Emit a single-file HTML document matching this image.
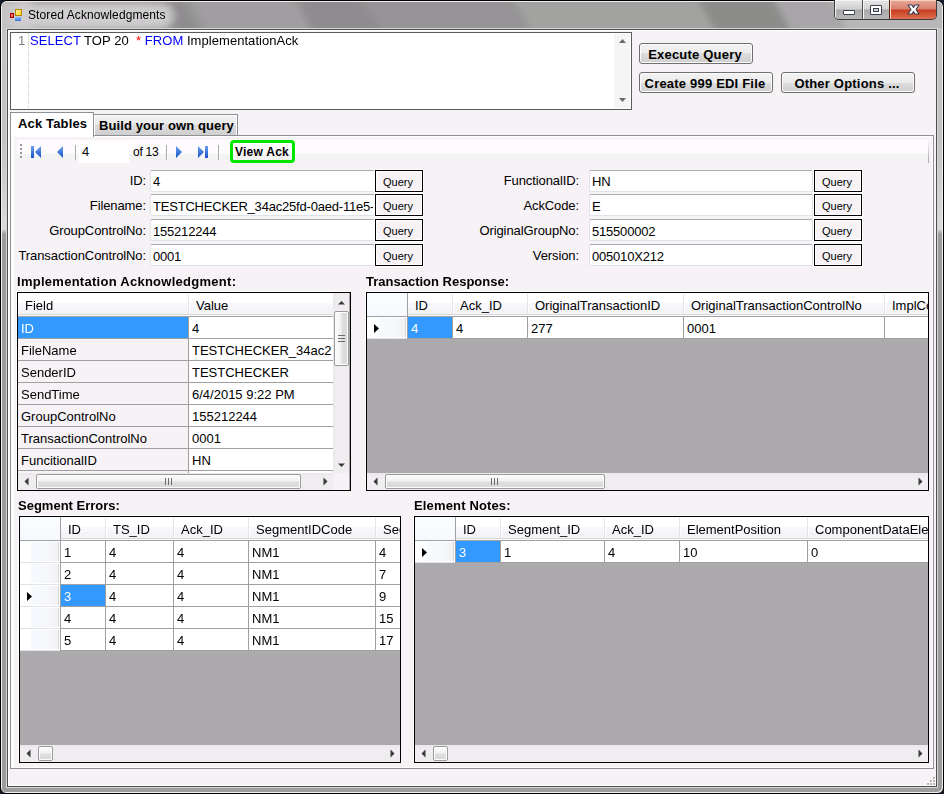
<!DOCTYPE html><html><head><meta charset="utf-8"><style>
html,body{margin:0;padding:0;width:944px;height:794px;overflow:hidden;background:#141c2c;}
body{position:relative;font-family:"Liberation Sans",sans-serif;}
div{position:absolute;box-sizing:border-box;}
.t{white-space:nowrap;}
</style></head><body>
<div style="left:0;top:0;width:944px;height:794px;border-radius:7px 7px 6px 6px;background:linear-gradient(180deg,#c6c4c6 0px,#c4c2c4 140px,#dcdadc 228px,#9c9e9c 233px,#9c9e9c 794px);border:1px solid #000;box-shadow:inset 1px 1px 0 #efedef,inset -1px -1px 0 #efedef;"></div>
<div style="left:2px;top:1px;width:940px;height:27px;border-radius:6px 6px 0 0;overflow:hidden;border-top:1px solid #eeeaee;background:#989698;"><div style="left:-2px;top:0;width:1000px;height:27px;filter:blur(3px);"><div style="left:150px;top:-5px;width:40px;height:40px;background:#8e8c8e;transform:skewX(28deg);"></div><div style="left:200px;top:-5px;width:105px;height:40px;background:#a09ea0;transform:skewX(28deg);"></div><div style="left:305px;top:-5px;width:68px;height:40px;background:#8e8c8e;transform:skewX(28deg);"></div><div style="left:373px;top:-5px;width:150px;height:40px;background:#969496;transform:skewX(28deg);"></div><div style="left:523px;top:-5px;width:185px;height:40px;background:#a2a2a0;transform:skewX(28deg);"></div><div style="left:708px;top:-5px;width:75px;height:40px;background:#8c8c8a;transform:skewX(28deg);"></div><div style="left:783px;top:-5px;width:100px;height:40px;background:#a8a6a8;transform:skewX(28deg);"></div><div style="left:840px;top:-5px;width:160px;height:40px;background:#b8b6b8;transform:skewX(28deg);"></div></div><div style="left:-10px;top:-4px;width:40px;height:36px;background:#c4c2c4;filter:blur(4px);"></div><div style="left:8px;top:1px;width:164px;height:26px;border-radius:13px;background:#d0ced0;filter:blur(4px);"></div></div>
<div style="left:6px;top:28px;width:932px;height:760px;border:1px solid #d8d8d8;"></div>
<div style="left:7px;top:29px;width:930px;height:758px;border:1px solid #4c504c;background:#f6f2f6;"></div>
<div style="left:8px;top:30px;width:928px;height:756px;border-left:1px solid #fff;border-top:1px solid #fff;border-bottom:1px solid #fff;"></div>
<div style="left:10px;top:13px;width:4px;height:5px;background:radial-gradient(#ffb0a0,#d03020);border:1px solid #a00;"></div>
<div style="left:15px;top:9px;width:7px;height:7px;background:linear-gradient(135deg,#fff0a0,#ffd020);border:1px solid #b08800;"></div>
<div style="left:15px;top:17px;width:6px;height:4px;background:linear-gradient(#90c0ff,#3070e0);"></div>
<div class="t" style="left:28px;top:8px;font-size:12px;line-height:14px;color:#000;letter-spacing:0.1px;">Stored Acknowledgments</div>
<div style="left:834px;top:0;width:103px;height:20px;border:1px solid #3c3c3c;border-top:none;border-radius:0 0 5px 5px;overflow:hidden;"><div style="left:0;top:0;width:28px;height:19px;background:linear-gradient(#e8e8e8 0,#d0d0d0 9px,#a8a8a8 10px,#b8b8b8 19px);border-right:1px solid #505050;box-shadow:inset 1px 1px 0 #f4f4f4;"></div><div style="left:28px;top:0;width:27px;height:19px;background:linear-gradient(#e8e8e8 0,#d0d0d0 9px,#a8a8a8 10px,#b8b8b8 19px);border-right:1px solid #602010;box-shadow:inset 1px 1px 0 #f4f4f4;"></div><div style="left:55px;top:0;width:47px;height:19px;background:linear-gradient(#eaa898 0,#d88070 9px,#c83c20 10px,#e07050 19px);box-shadow:inset 1px 1px 0 #f8d0c0;"></div></div>
<div style="left:843px;top:10px;width:12px;height:5px;background:#fff;border:1px solid #3a4050;border-radius:1px;"></div>
<div style="left:870px;top:5px;width:12px;height:10px;background:#fff;border:1px solid #3a4050;border-radius:1px;"></div>
<div style="left:873px;top:8px;width:6px;height:4px;background:#d0d0d0;border:1px solid #3a4050;"></div>
<svg style="position:absolute;left:904px;top:2px" width="20" height="16" viewBox="0 0 20 16"><path d="M4 3 L8 3 L9.5 5.5 L11 3 L15 3 L12 7.5 L15 12 L11 12 L9.5 9.5 L8 12 L4 12 L7 7.5 Z" fill="#fff" stroke="#3a4050" stroke-width="1.1" stroke-linejoin="round"/></svg>
<div style="left:10px;top:32px;width:622px;height:78px;border:1px solid #5a5c5a;background:#fff;"></div>
<div style="left:614px;top:34px;width:16px;height:74px;background:#f5f5f5;"></div>
<svg style="position:absolute;left:618px;top:38px" width="9" height="6"><path d="M1 5 L4.5 1 L8 5 Z" fill="#6a6a6a"/></svg>
<svg style="position:absolute;left:618px;top:97px" width="9" height="6"><path d="M1 1 L4.5 5 L8 1 Z" fill="#6a6a6a"/></svg>
<div class="t" style="left:18px;top:33px;font-size:13px;line-height:15px;color:#808080;">1</div>
<div style="left:28px;top:33px;width:1px;height:76px;background:repeating-linear-gradient(#c8c8c8 0,#c8c8c8 1px,transparent 1px,transparent 2px);"></div>
<div class="t" style="left:30px;top:33px;font-size:13px;line-height:15px;color:#000;letter-spacing:0.05px;"><span style="color:#0000ff">SELECT</span> TOP 20&nbsp; <span style="color:#ff0000">*</span> <span style="color:#0000ff">FROM</span> ImplementationAck</div>
<div style="left:639px;top:43px;width:114px;height:21px;border:1px solid #707070;border-radius:3px;background:linear-gradient(#f2f2f2 0,#ebebeb 50%,#dddddd 50%,#cfcfcf 100%);box-shadow:inset 0 0 0 1px #fcfcfc;"></div>
<div class="t" style="left:638px;top:47px;width:114px;text-align:center;font-size:13px;line-height:15px;font-weight:bold;letter-spacing:0.2px;">Execute Query</div>
<div style="left:639px;top:72px;width:134px;height:21px;border:1px solid #707070;border-radius:3px;background:linear-gradient(#f2f2f2 0,#ebebeb 50%,#dddddd 50%,#cfcfcf 100%);box-shadow:inset 0 0 0 1px #fcfcfc;"></div>
<div class="t" style="left:638px;top:76px;width:134px;text-align:center;font-size:13px;line-height:15px;font-weight:bold;letter-spacing:0.2px;">Create 999 EDI File</div>
<div style="left:781px;top:72px;width:134px;height:21px;border:1px solid #707070;border-radius:3px;background:linear-gradient(#f2f2f2 0,#ebebeb 50%,#dddddd 50%,#cfcfcf 100%);box-shadow:inset 0 0 0 1px #fcfcfc;"></div>
<div class="t" style="left:780px;top:76px;width:134px;text-align:center;font-size:13px;line-height:15px;font-weight:bold;letter-spacing:0.2px;">Other Options ...</div>
<div style="left:10px;top:135px;width:924px;height:634px;border:1px solid #8e9096;"></div>
<div style="left:11px;top:136px;width:922px;height:632px;border:1px solid #fff;"></div>
<div style="left:12px;top:137px;width:2px;height:630px;background:#fff;"></div>
<div style="left:93px;top:114px;width:145px;height:22px;border:1px solid #8e9096;background:linear-gradient(#f2f2f2 0,#ebebeb 45%,#dddddd 50%,#cfcfcf 100%);box-shadow:inset 1px 1px 0 #fff,inset -1px 0 0 #fff;"></div>
<div class="t" style="left:99px;top:118px;font-size:13px;line-height:15px;font-weight:bold;color:#000;letter-spacing:0.1px;">Build your own query</div>
<div style="left:10px;top:112px;width:84px;height:25px;border:1px solid #8e9096;border-bottom:none;background:#fff;"></div>
<div class="t" style="left:18px;top:116px;font-size:13px;line-height:15px;font-weight:bold;color:#000;letter-spacing:0.15px;">Ack Tables</div>
<div style="left:17px;top:140px;width:911px;height:20px;border-radius:3px 0 0 3px;background:linear-gradient(#fdfbfd 0,#fdfbfd 14px,#f4f3f4 14px,#f4f3f4 20px);"></div>
<div style="left:928px;top:141px;width:1px;height:22px;background:linear-gradient(#f4f2f4,#a8a8a8);"></div>
<div style="left:20px;top:144px;width:2px;height:2px;background:#9a9a9a;"></div>
<div style="left:20px;top:148px;width:2px;height:2px;background:#9a9a9a;"></div>
<div style="left:20px;top:152px;width:2px;height:2px;background:#9a9a9a;"></div>
<div style="left:20px;top:156px;width:2px;height:2px;background:#9a9a9a;"></div>
<svg style="position:absolute;left:30px;top:145px" width="200" height="14" viewBox="0 0 200 14"><defs><linearGradient id="bl" x1="0" y1="0" x2="0" y2="1"><stop offset="0" stop-color="#6aa0f0"/><stop offset="1" stop-color="#1a50c8"/></linearGradient></defs><rect x="1" y="1" width="3" height="12" fill="url(#bl)"/><path d="M11 1 L5 7 L11 13 Z" fill="url(#bl)"/><path d="M33 1 L27 7 L33 13 Z" fill="url(#bl)"/><path d="M146 1 L152 7 L146 13 Z" fill="url(#bl)"/><path d="M168 1 L174 7 L168 13 Z" fill="url(#bl)"/><rect x="175" y="1" width="3" height="12" fill="url(#bl)"/></svg>
<div style="left:75px;top:145px;width:1px;height:15px;background:#a8a8a8;box-shadow:1px 0 0 #fff;"></div>
<div style="left:166px;top:145px;width:1px;height:15px;background:#a8a8a8;box-shadow:1px 0 0 #fff;"></div>
<div style="left:218px;top:145px;width:1px;height:15px;background:#a8a8a8;box-shadow:1px 0 0 #fff;"></div>
<div style="left:79px;top:141px;width:50px;height:22px;background:#fff;"></div>
<div class="t" style="left:82px;top:144px;font-size:13px;line-height:15px;color:#000;">4</div>
<div class="t" style="left:133px;top:145px;font-size:12px;line-height:14px;color:#000;letter-spacing:-0.25px;">of 13</div>
<div style="left:230px;top:140px;width:65px;height:23px;border:3px solid #00e600;border-radius:4px;"></div>
<div class="t" style="left:235px;top:145px;font-size:12px;line-height:14px;font-weight:bold;color:#000;letter-spacing:0.25px;">View Ack</div>
<div class="t" style="right:798px;top:173px;font-size:13px;line-height:15px;color:#000;text-align:right;letter-spacing:-0.1px;">ID:</div>
<div style="left:150px;top:170px;width:225px;height:22px;background:#fff;border:1px solid #dfe2e8;border-top-color:#abadb3;border-radius:2px;"></div>
<div class="t" style="left:153px;top:174px;width:220px;overflow:hidden;font-size:13px;line-height:15px;letter-spacing:-0.2px;">4</div>
<div style="left:375px;top:170px;width:48px;height:22px;border:1px solid #000;background:#f6f2f6;box-shadow:inset 0 0 0 1px #fff,0 0 0 1px #fff;"></div>
<div class="t" style="left:383px;top:176px;font-size:11px;line-height:13px;color:#000;">Query</div>
<div class="t" style="right:798px;top:198px;font-size:13px;line-height:15px;color:#000;text-align:right;letter-spacing:-0.1px;">Filename:</div>
<div style="left:150px;top:194px;width:225px;height:22px;background:#fff;border:1px solid #dfe2e8;border-top-color:#abadb3;border-radius:2px;"></div>
<div class="t" style="left:153px;top:199px;width:220px;overflow:hidden;font-size:13px;line-height:15px;letter-spacing:-0.2px;">TESTCHECKER_34ac25fd-0aed-11e5-</div>
<div style="left:375px;top:194px;width:48px;height:22px;border:1px solid #000;background:#f6f2f6;box-shadow:inset 0 0 0 1px #fff,0 0 0 1px #fff;"></div>
<div class="t" style="left:383px;top:200px;font-size:11px;line-height:13px;color:#000;">Query</div>
<div class="t" style="right:798px;top:223px;font-size:13px;line-height:15px;color:#000;text-align:right;letter-spacing:-0.1px;">GroupControlNo:</div>
<div style="left:150px;top:219px;width:225px;height:22px;background:#fff;border:1px solid #dfe2e8;border-top-color:#abadb3;border-radius:2px;"></div>
<div class="t" style="left:153px;top:224px;width:220px;overflow:hidden;font-size:13px;line-height:15px;letter-spacing:-0.2px;">155212244</div>
<div style="left:375px;top:219px;width:48px;height:22px;border:1px solid #000;background:#f6f2f6;box-shadow:inset 0 0 0 1px #fff,0 0 0 1px #fff;"></div>
<div class="t" style="left:383px;top:225px;font-size:11px;line-height:13px;color:#000;">Query</div>
<div class="t" style="right:798px;top:248px;font-size:13px;line-height:15px;color:#000;text-align:right;letter-spacing:-0.1px;">TransactionControlNo:</div>
<div style="left:150px;top:244px;width:225px;height:22px;background:#fff;border:1px solid #dfe2e8;border-top-color:#abadb3;border-radius:2px;"></div>
<div class="t" style="left:153px;top:249px;width:220px;overflow:hidden;font-size:13px;line-height:15px;letter-spacing:-0.2px;">0001</div>
<div style="left:375px;top:244px;width:48px;height:22px;border:1px solid #000;background:#f6f2f6;box-shadow:inset 0 0 0 1px #fff,0 0 0 1px #fff;"></div>
<div class="t" style="left:383px;top:250px;font-size:11px;line-height:13px;color:#000;">Query</div>
<div class="t" style="right:365px;top:173px;font-size:13px;line-height:15px;color:#000;text-align:right;letter-spacing:-0.1px;">FunctionalID:</div>
<div style="left:589px;top:170px;width:224px;height:22px;background:#fff;border:1px solid #dfe2e8;border-top-color:#abadb3;border-radius:2px;"></div>
<div class="t" style="left:592px;top:174px;width:219px;overflow:hidden;font-size:13px;line-height:15px;letter-spacing:-0.2px;">HN</div>
<div style="left:814px;top:170px;width:48px;height:22px;border:1px solid #000;background:#f6f2f6;box-shadow:inset 0 0 0 1px #fff,0 0 0 1px #fff;"></div>
<div class="t" style="left:822px;top:176px;font-size:11px;line-height:13px;color:#000;">Query</div>
<div class="t" style="right:365px;top:198px;font-size:13px;line-height:15px;color:#000;text-align:right;letter-spacing:-0.1px;">AckCode:</div>
<div style="left:589px;top:194px;width:224px;height:22px;background:#fff;border:1px solid #dfe2e8;border-top-color:#abadb3;border-radius:2px;"></div>
<div class="t" style="left:592px;top:199px;width:219px;overflow:hidden;font-size:13px;line-height:15px;letter-spacing:-0.2px;">E</div>
<div style="left:814px;top:194px;width:48px;height:22px;border:1px solid #000;background:#f6f2f6;box-shadow:inset 0 0 0 1px #fff,0 0 0 1px #fff;"></div>
<div class="t" style="left:822px;top:200px;font-size:11px;line-height:13px;color:#000;">Query</div>
<div class="t" style="right:365px;top:223px;font-size:13px;line-height:15px;color:#000;text-align:right;letter-spacing:-0.1px;">OriginalGroupNo:</div>
<div style="left:589px;top:219px;width:224px;height:22px;background:#fff;border:1px solid #dfe2e8;border-top-color:#abadb3;border-radius:2px;"></div>
<div class="t" style="left:592px;top:224px;width:219px;overflow:hidden;font-size:13px;line-height:15px;letter-spacing:-0.2px;">515500002</div>
<div style="left:814px;top:219px;width:48px;height:22px;border:1px solid #000;background:#f6f2f6;box-shadow:inset 0 0 0 1px #fff,0 0 0 1px #fff;"></div>
<div class="t" style="left:822px;top:225px;font-size:11px;line-height:13px;color:#000;">Query</div>
<div class="t" style="right:365px;top:248px;font-size:13px;line-height:15px;color:#000;text-align:right;letter-spacing:-0.1px;">Version:</div>
<div style="left:589px;top:244px;width:224px;height:22px;background:#fff;border:1px solid #dfe2e8;border-top-color:#abadb3;border-radius:2px;"></div>
<div class="t" style="left:592px;top:249px;width:219px;overflow:hidden;font-size:13px;line-height:15px;letter-spacing:-0.2px;">005010X212</div>
<div style="left:814px;top:244px;width:48px;height:22px;border:1px solid #000;background:#f6f2f6;box-shadow:inset 0 0 0 1px #fff,0 0 0 1px #fff;"></div>
<div class="t" style="left:822px;top:250px;font-size:11px;line-height:13px;color:#000;">Query</div>
<div style="left:17px;top:292px;width:334px;height:199px;border:1px solid #000;background:#acaaac;box-shadow:-1px -1px 0 #fff;"></div>
<div style="left:18px;top:293px;width:332px;height:197px;overflow:hidden;">
<div style="left:0px;top:0px;width:316px;height:23px;background:linear-gradient(#fff 0,#fff 10px,#f7f7fc 10px,#f7f7fc 15px,#f4f3f5 15px,#f4f3f5 21px,#d8d8d8 21px,#d8d8d8 22px,#fdfdfd 22px);"></div>
<div style="left:0px;top:23px;width:316px;height:177px;background:#fff;"></div>
<div style="left:0px;top:23px;width:316px;height:1px;background:#a0a0a0;"></div>
<div style="left:0px;top:45px;width:316px;height:1px;background:#a0a0a0;"></div>
<div style="left:0px;top:67px;width:316px;height:1px;background:#a0a0a0;"></div>
<div style="left:0px;top:89px;width:316px;height:1px;background:#a0a0a0;"></div>
<div style="left:0px;top:111px;width:316px;height:1px;background:#a0a0a0;"></div>
<div style="left:0px;top:133px;width:316px;height:1px;background:#a0a0a0;"></div>
<div style="left:0px;top:155px;width:316px;height:1px;background:#a0a0a0;"></div>
<div style="left:0px;top:177px;width:316px;height:1px;background:#a0a0a0;"></div>
<div style="left:0px;top:199px;width:316px;height:1px;background:#a0a0a0;"></div>
<div style="left:170px;top:1px;width:1px;height:20px;background:#e4e4ea;box-shadow:1px 0 0 #fff;"></div>
<div style="left:170px;top:23px;width:1px;height:177px;background:#a0a0a0;"></div>
<div class="t" style="left:7px;top:5px;width:163px;overflow:hidden;font-size:13px;line-height:15px;color:#000;">Field</div>
<div style="left:0px;top:24px;width:170px;height:21px;background:#3399ff;"></div>
<div class="t" style="left:3px;top:28px;width:166px;overflow:hidden;font-size:13px;line-height:15px;color:#fff;">ID</div>
<div style="left:0px;top:46px;width:170px;height:21px;background:#f6f2f6;"></div>
<div class="t" style="left:3px;top:50px;width:166px;overflow:hidden;font-size:13px;line-height:15px;color:#000;">FileName</div>
<div style="left:0px;top:68px;width:170px;height:21px;background:#f6f2f6;"></div>
<div class="t" style="left:3px;top:72px;width:166px;overflow:hidden;font-size:13px;line-height:15px;color:#000;">SenderID</div>
<div style="left:0px;top:90px;width:170px;height:21px;background:#f6f2f6;"></div>
<div class="t" style="left:3px;top:94px;width:166px;overflow:hidden;font-size:13px;line-height:15px;color:#000;">SendTime</div>
<div style="left:0px;top:112px;width:170px;height:21px;background:#f6f2f6;"></div>
<div class="t" style="left:3px;top:116px;width:166px;overflow:hidden;font-size:13px;line-height:15px;color:#000;">GroupControlNo</div>
<div style="left:0px;top:134px;width:170px;height:21px;background:#f6f2f6;"></div>
<div class="t" style="left:3px;top:138px;width:166px;overflow:hidden;font-size:13px;line-height:15px;color:#000;">TransactionControlNo</div>
<div style="left:0px;top:156px;width:170px;height:21px;background:#f6f2f6;"></div>
<div class="t" style="left:3px;top:160px;width:166px;overflow:hidden;font-size:13px;line-height:15px;color:#000;">FuncitionalID</div>
<div style="left:0px;top:178px;width:170px;height:21px;background:#f6f2f6;"></div>
<div class="t" style="left:3px;top:182px;width:166px;overflow:hidden;font-size:13px;line-height:15px;color:#000;"></div>
<div style="left:315px;top:1px;width:1px;height:20px;background:#e4e4ea;box-shadow:1px 0 0 #fff;"></div>
<div style="left:315px;top:23px;width:1px;height:177px;background:#a0a0a0;"></div>
<div class="t" style="left:178px;top:5px;width:137px;overflow:hidden;font-size:13px;line-height:15px;color:#000;">Value</div>
<div class="t" style="left:174px;top:28px;width:140px;overflow:hidden;font-size:13px;line-height:15px;color:#000;">4</div>
<div class="t" style="left:174px;top:50px;width:140px;overflow:hidden;font-size:13px;line-height:15px;color:#000;">TESTCHECKER_34ac2...</div>
<div class="t" style="left:174px;top:72px;width:140px;overflow:hidden;font-size:13px;line-height:15px;color:#000;">TESTCHECKER</div>
<div class="t" style="left:174px;top:94px;width:140px;overflow:hidden;font-size:13px;line-height:15px;color:#000;">6/4/2015 9:22 PM</div>
<div class="t" style="left:174px;top:116px;width:140px;overflow:hidden;font-size:13px;line-height:15px;color:#000;">155212244</div>
<div class="t" style="left:174px;top:138px;width:140px;overflow:hidden;font-size:13px;line-height:15px;color:#000;">0001</div>
<div class="t" style="left:174px;top:160px;width:140px;overflow:hidden;font-size:13px;line-height:15px;color:#000;">HN</div>
<div class="t" style="left:174px;top:182px;width:140px;overflow:hidden;font-size:13px;line-height:15px;color:#000;"></div>
</div>
<div style="left:333px;top:293px;width:16px;height:180px;background:linear-gradient(90deg,#e8e6e8 0,#eeecee 2px,#f0eef0 50%,#eeecee 100%);"></div>
<svg style="position:absolute;left:337px;top:300px" width="9" height="5"><path d="M1 4.5 L4.5 1 L8 4.5 Z" fill="#3a3a3a"/></svg>
<svg style="position:absolute;left:337px;top:463px" width="9" height="5"><path d="M1 0.5 L4.5 4 L8 0.5 Z" fill="#3a3a3a"/></svg>
<div style="left:334px;top:311px;width:15px;height:55px;border:1px solid #9c9a9c;border-radius:2px;background:linear-gradient(90deg,#fbfbfb 0,#f2f2f2 45%,#dedede 55%,#d8d8d8 100%);box-shadow:inset 0 0 0 1px #fdfdfd;"></div>
<div style="left:338px;top:335px;width:7px;height:1px;background:#6a6a6a;"></div>
<div style="left:338px;top:338px;width:7px;height:1px;background:#6a6a6a;"></div>
<div style="left:338px;top:341px;width:7px;height:1px;background:#6a6a6a;"></div>
<div style="left:18px;top:473px;width:315px;height:17px;background:linear-gradient(#e8e6e8 0,#eeecee 2px,#f0eef0 50%,#eeecee 100%);"></div>
<svg style="position:absolute;left:24px;top:477px" width="6" height="9"><path d="M4.5 0.5 L0.5 4.5 L4.5 8.5 Z" fill="#3a3a3a"/></svg>
<svg style="position:absolute;left:323px;top:477px" width="6" height="9"><path d="M0.5 0.5 L4.5 4.5 L0.5 8.5 Z" fill="#3a3a3a"/></svg>
<div style="left:36px;top:474px;width:265px;height:15px;border:1px solid #9c9a9c;border-radius:2px;background:linear-gradient(#fbfbfb 0,#f2f2f2 45%,#dedede 55%,#d8d8d8 100%);box-shadow:inset 0 0 0 1px #fdfdfd;"></div>
<div style="left:165px;top:478px;width:1px;height:7px;background:#6a6a6a;"></div>
<div style="left:168px;top:478px;width:1px;height:7px;background:#6a6a6a;"></div>
<div style="left:171px;top:478px;width:1px;height:7px;background:#6a6a6a;"></div>
<div style="left:333px;top:473px;width:16px;height:17px;background:#f6f2f6;"></div>
<div style="left:366px;top:292px;width:563px;height:199px;border:1px solid #000;background:#acaaac;box-shadow:-1px -1px 0 #fff;"></div>
<div style="left:367px;top:293px;width:561px;height:197px;overflow:hidden;">
<div style="left:0px;top:0px;width:561px;height:23px;background:linear-gradient(#fff 0,#fff 10px,#f7f7fc 10px,#f7f7fc 15px,#f4f3f5 15px,#f4f3f5 21px,#d8d8d8 21px,#d8d8d8 22px,#fdfdfd 22px);"></div>
<div style="left:0px;top:23px;width:561px;height:23px;background:#fff;"></div>
<div style="left:0px;top:0px;width:40px;height:23px;background:linear-gradient(#fafcff,#f6f9fd);"></div>
<div style="left:0px;top:24px;width:40px;height:21px;background:linear-gradient(90deg,#fff 0,#fff 11px,#f6f9fd 11px,#f5f7fb 28px,#f3f1f4 38px,#d8d8d8 38px,#d8d8d8 39px,#fff 39px);border-top:1px solid #fff;border-bottom:1px solid #fff;"></div>
<div style="left:40px;top:0px;width:1px;height:46px;background:#a0a0a0;"></div>
<svg style="position:absolute;left:7px;top:31px" width="6" height="10"><path d="M0 0 L5 4.5 L0 9 Z" fill="#000"/></svg>
<div style="left:0px;top:23px;width:561px;height:1px;background:#a0a0a0;"></div>
<div style="left:41px;top:45px;width:520px;height:1px;background:#a0a0a0;"></div>
<div style="left:0px;top:45px;width:40px;height:1px;background:#e2e2e8;"></div>
<div style="left:85px;top:1px;width:1px;height:20px;background:#e4e4ea;box-shadow:1px 0 0 #fff;"></div>
<div style="left:85px;top:23px;width:1px;height:23px;background:#a0a0a0;"></div>
<div class="t" style="left:48px;top:5px;width:37px;overflow:hidden;font-size:13px;line-height:15px;color:#000;">ID</div>
<div style="left:41px;top:24px;width:44px;height:21px;background:#3399ff;"></div>
<div class="t" style="left:44px;top:28px;width:40px;overflow:hidden;font-size:13px;line-height:15px;color:#fff;">4</div>
<div style="left:160px;top:1px;width:1px;height:20px;background:#e4e4ea;box-shadow:1px 0 0 #fff;"></div>
<div style="left:160px;top:23px;width:1px;height:23px;background:#a0a0a0;"></div>
<div class="t" style="left:93px;top:5px;width:67px;overflow:hidden;font-size:13px;line-height:15px;color:#000;">Ack_ID</div>
<div class="t" style="left:89px;top:28px;width:70px;overflow:hidden;font-size:13px;line-height:15px;color:#000;">4</div>
<div style="left:316px;top:1px;width:1px;height:20px;background:#e4e4ea;box-shadow:1px 0 0 #fff;"></div>
<div style="left:316px;top:23px;width:1px;height:23px;background:#a0a0a0;"></div>
<div class="t" style="left:168px;top:5px;width:148px;overflow:hidden;font-size:13px;line-height:15px;color:#000;">OriginalTransactionID</div>
<div class="t" style="left:164px;top:28px;width:151px;overflow:hidden;font-size:13px;line-height:15px;color:#000;">277</div>
<div style="left:517px;top:1px;width:1px;height:20px;background:#e4e4ea;box-shadow:1px 0 0 #fff;"></div>
<div style="left:517px;top:23px;width:1px;height:23px;background:#a0a0a0;"></div>
<div class="t" style="left:324px;top:5px;width:193px;overflow:hidden;font-size:13px;line-height:15px;color:#000;">OriginalTransactionControlNo</div>
<div class="t" style="left:320px;top:28px;width:196px;overflow:hidden;font-size:13px;line-height:15px;color:#000;">0001</div>
<div class="t" style="left:525px;top:5px;width:36px;overflow:hidden;font-size:13px;line-height:15px;color:#000;">ImplControlNo</div>
<div class="t" style="left:521px;top:28px;width:39px;overflow:hidden;font-size:13px;line-height:15px;color:#000;"></div>
</div>
<div style="left:367px;top:473px;width:561px;height:17px;background:linear-gradient(#e8e6e8 0,#eeecee 2px,#f0eef0 50%,#eeecee 100%);"></div>
<svg style="position:absolute;left:373px;top:477px" width="6" height="9"><path d="M4.5 0.5 L0.5 4.5 L4.5 8.5 Z" fill="#3a3a3a"/></svg>
<svg style="position:absolute;left:918px;top:477px" width="6" height="9"><path d="M0.5 0.5 L4.5 4.5 L0.5 8.5 Z" fill="#3a3a3a"/></svg>
<div style="left:385px;top:474px;width:220px;height:15px;border:1px solid #9c9a9c;border-radius:2px;background:linear-gradient(#fbfbfb 0,#f2f2f2 45%,#dedede 55%,#d8d8d8 100%);box-shadow:inset 0 0 0 1px #fdfdfd;"></div>
<div style="left:491px;top:478px;width:1px;height:7px;background:#6a6a6a;"></div>
<div style="left:494px;top:478px;width:1px;height:7px;background:#6a6a6a;"></div>
<div style="left:497px;top:478px;width:1px;height:7px;background:#6a6a6a;"></div>
<div style="left:19px;top:516px;width:382px;height:247px;border:1px solid #000;background:#acaaac;box-shadow:-1px -1px 0 #fff;"></div>
<div style="left:20px;top:517px;width:380px;height:245px;overflow:hidden;">
<div style="left:0px;top:0px;width:380px;height:23px;background:linear-gradient(#fff 0,#fff 10px,#f7f7fc 10px,#f7f7fc 15px,#f4f3f5 15px,#f4f3f5 21px,#d8d8d8 21px,#d8d8d8 22px,#fdfdfd 22px);"></div>
<div style="left:0px;top:23px;width:380px;height:111px;background:#fff;"></div>
<div style="left:0px;top:0px;width:40px;height:23px;background:linear-gradient(#fafcff,#f6f9fd);"></div>
<div style="left:0px;top:24px;width:40px;height:21px;background:linear-gradient(90deg,#fff 0,#fff 11px,#f6f9fd 11px,#f5f7fb 28px,#f3f1f4 38px,#d8d8d8 38px,#d8d8d8 39px,#fff 39px);border-top:1px solid #fff;border-bottom:1px solid #fff;"></div>
<div style="left:0px;top:46px;width:40px;height:21px;background:linear-gradient(90deg,#fff 0,#fff 11px,#f6f9fd 11px,#f5f7fb 28px,#f3f1f4 38px,#d8d8d8 38px,#d8d8d8 39px,#fff 39px);border-top:1px solid #fff;border-bottom:1px solid #fff;"></div>
<div style="left:0px;top:68px;width:40px;height:21px;background:linear-gradient(90deg,#fff 0,#fff 11px,#f6f9fd 11px,#f5f7fb 28px,#f3f1f4 38px,#d8d8d8 38px,#d8d8d8 39px,#fff 39px);border-top:1px solid #fff;border-bottom:1px solid #fff;"></div>
<div style="left:0px;top:90px;width:40px;height:21px;background:linear-gradient(90deg,#fff 0,#fff 11px,#f6f9fd 11px,#f5f7fb 28px,#f3f1f4 38px,#d8d8d8 38px,#d8d8d8 39px,#fff 39px);border-top:1px solid #fff;border-bottom:1px solid #fff;"></div>
<div style="left:0px;top:112px;width:40px;height:21px;background:linear-gradient(90deg,#fff 0,#fff 11px,#f6f9fd 11px,#f5f7fb 28px,#f3f1f4 38px,#d8d8d8 38px,#d8d8d8 39px,#fff 39px);border-top:1px solid #fff;border-bottom:1px solid #fff;"></div>
<div style="left:40px;top:0px;width:1px;height:134px;background:#a0a0a0;"></div>
<svg style="position:absolute;left:7px;top:75px" width="6" height="10"><path d="M0 0 L5 4.5 L0 9 Z" fill="#000"/></svg>
<div style="left:0px;top:23px;width:380px;height:1px;background:#a0a0a0;"></div>
<div style="left:41px;top:45px;width:339px;height:1px;background:#a0a0a0;"></div>
<div style="left:0px;top:45px;width:40px;height:1px;background:#e2e2e8;"></div>
<div style="left:41px;top:67px;width:339px;height:1px;background:#a0a0a0;"></div>
<div style="left:0px;top:67px;width:40px;height:1px;background:#e2e2e8;"></div>
<div style="left:41px;top:89px;width:339px;height:1px;background:#a0a0a0;"></div>
<div style="left:0px;top:89px;width:40px;height:1px;background:#e2e2e8;"></div>
<div style="left:41px;top:111px;width:339px;height:1px;background:#a0a0a0;"></div>
<div style="left:0px;top:111px;width:40px;height:1px;background:#e2e2e8;"></div>
<div style="left:41px;top:133px;width:339px;height:1px;background:#a0a0a0;"></div>
<div style="left:0px;top:133px;width:40px;height:1px;background:#e2e2e8;"></div>
<div style="left:85px;top:1px;width:1px;height:20px;background:#e4e4ea;box-shadow:1px 0 0 #fff;"></div>
<div style="left:85px;top:23px;width:1px;height:111px;background:#a0a0a0;"></div>
<div class="t" style="left:48px;top:5px;width:37px;overflow:hidden;font-size:13px;line-height:15px;color:#000;">ID</div>
<div class="t" style="left:44px;top:28px;width:40px;overflow:hidden;font-size:13px;line-height:15px;color:#000;">1</div>
<div class="t" style="left:44px;top:50px;width:40px;overflow:hidden;font-size:13px;line-height:15px;color:#000;">2</div>
<div style="left:41px;top:68px;width:44px;height:21px;background:#3399ff;"></div>
<div class="t" style="left:44px;top:72px;width:40px;overflow:hidden;font-size:13px;line-height:15px;color:#fff;">3</div>
<div class="t" style="left:44px;top:94px;width:40px;overflow:hidden;font-size:13px;line-height:15px;color:#000;">4</div>
<div class="t" style="left:44px;top:116px;width:40px;overflow:hidden;font-size:13px;line-height:15px;color:#000;">5</div>
<div style="left:153px;top:1px;width:1px;height:20px;background:#e4e4ea;box-shadow:1px 0 0 #fff;"></div>
<div style="left:153px;top:23px;width:1px;height:111px;background:#a0a0a0;"></div>
<div class="t" style="left:93px;top:5px;width:60px;overflow:hidden;font-size:13px;line-height:15px;color:#000;">TS_ID</div>
<div class="t" style="left:89px;top:28px;width:63px;overflow:hidden;font-size:13px;line-height:15px;color:#000;">4</div>
<div class="t" style="left:89px;top:50px;width:63px;overflow:hidden;font-size:13px;line-height:15px;color:#000;">4</div>
<div class="t" style="left:89px;top:72px;width:63px;overflow:hidden;font-size:13px;line-height:15px;color:#000;">4</div>
<div class="t" style="left:89px;top:94px;width:63px;overflow:hidden;font-size:13px;line-height:15px;color:#000;">4</div>
<div class="t" style="left:89px;top:116px;width:63px;overflow:hidden;font-size:13px;line-height:15px;color:#000;">4</div>
<div style="left:228px;top:1px;width:1px;height:20px;background:#e4e4ea;box-shadow:1px 0 0 #fff;"></div>
<div style="left:228px;top:23px;width:1px;height:111px;background:#a0a0a0;"></div>
<div class="t" style="left:161px;top:5px;width:67px;overflow:hidden;font-size:13px;line-height:15px;color:#000;">Ack_ID</div>
<div class="t" style="left:157px;top:28px;width:70px;overflow:hidden;font-size:13px;line-height:15px;color:#000;">4</div>
<div class="t" style="left:157px;top:50px;width:70px;overflow:hidden;font-size:13px;line-height:15px;color:#000;">4</div>
<div class="t" style="left:157px;top:72px;width:70px;overflow:hidden;font-size:13px;line-height:15px;color:#000;">4</div>
<div class="t" style="left:157px;top:94px;width:70px;overflow:hidden;font-size:13px;line-height:15px;color:#000;">4</div>
<div class="t" style="left:157px;top:116px;width:70px;overflow:hidden;font-size:13px;line-height:15px;color:#000;">4</div>
<div style="left:355px;top:1px;width:1px;height:20px;background:#e4e4ea;box-shadow:1px 0 0 #fff;"></div>
<div style="left:355px;top:23px;width:1px;height:111px;background:#a0a0a0;"></div>
<div class="t" style="left:236px;top:5px;width:119px;overflow:hidden;font-size:13px;line-height:15px;color:#000;">SegmentIDCode</div>
<div class="t" style="left:232px;top:28px;width:122px;overflow:hidden;font-size:13px;line-height:15px;color:#000;">NM1</div>
<div class="t" style="left:232px;top:50px;width:122px;overflow:hidden;font-size:13px;line-height:15px;color:#000;">NM1</div>
<div class="t" style="left:232px;top:72px;width:122px;overflow:hidden;font-size:13px;line-height:15px;color:#000;">NM1</div>
<div class="t" style="left:232px;top:94px;width:122px;overflow:hidden;font-size:13px;line-height:15px;color:#000;">NM1</div>
<div class="t" style="left:232px;top:116px;width:122px;overflow:hidden;font-size:13px;line-height:15px;color:#000;">NM1</div>
<div class="t" style="left:363px;top:5px;width:17px;overflow:hidden;font-size:13px;line-height:15px;color:#000;">SegmentPosition</div>
<div class="t" style="left:359px;top:28px;width:20px;overflow:hidden;font-size:13px;line-height:15px;color:#000;">4</div>
<div class="t" style="left:359px;top:50px;width:20px;overflow:hidden;font-size:13px;line-height:15px;color:#000;">7</div>
<div class="t" style="left:359px;top:72px;width:20px;overflow:hidden;font-size:13px;line-height:15px;color:#000;">9</div>
<div class="t" style="left:359px;top:94px;width:20px;overflow:hidden;font-size:13px;line-height:15px;color:#000;">15</div>
<div class="t" style="left:359px;top:116px;width:20px;overflow:hidden;font-size:13px;line-height:15px;color:#000;">17</div>
</div>
<div style="left:20px;top:745px;width:380px;height:17px;background:linear-gradient(#e8e6e8 0,#eeecee 2px,#f0eef0 50%,#eeecee 100%);"></div>
<svg style="position:absolute;left:26px;top:749px" width="6" height="9"><path d="M4.5 0.5 L0.5 4.5 L4.5 8.5 Z" fill="#3a3a3a"/></svg>
<svg style="position:absolute;left:390px;top:749px" width="6" height="9"><path d="M0.5 0.5 L4.5 4.5 L0.5 8.5 Z" fill="#3a3a3a"/></svg>
<div style="left:38px;top:746px;width:15px;height:15px;border:1px solid #9c9a9c;border-radius:2px;background:linear-gradient(#fbfbfb 0,#f2f2f2 45%,#dedede 55%,#d8d8d8 100%);box-shadow:inset 0 0 0 1px #fdfdfd;"></div>
<div style="left:414px;top:516px;width:515px;height:247px;border:1px solid #000;background:#acaaac;box-shadow:-1px -1px 0 #fff;"></div>
<div style="left:415px;top:517px;width:513px;height:245px;overflow:hidden;">
<div style="left:0px;top:0px;width:513px;height:23px;background:linear-gradient(#fff 0,#fff 10px,#f7f7fc 10px,#f7f7fc 15px,#f4f3f5 15px,#f4f3f5 21px,#d8d8d8 21px,#d8d8d8 22px,#fdfdfd 22px);"></div>
<div style="left:0px;top:23px;width:513px;height:23px;background:#fff;"></div>
<div style="left:0px;top:0px;width:40px;height:23px;background:linear-gradient(#fafcff,#f6f9fd);"></div>
<div style="left:0px;top:24px;width:40px;height:21px;background:linear-gradient(90deg,#fff 0,#fff 11px,#f6f9fd 11px,#f5f7fb 28px,#f3f1f4 38px,#d8d8d8 38px,#d8d8d8 39px,#fff 39px);border-top:1px solid #fff;border-bottom:1px solid #fff;"></div>
<div style="left:40px;top:0px;width:1px;height:46px;background:#a0a0a0;"></div>
<svg style="position:absolute;left:7px;top:31px" width="6" height="10"><path d="M0 0 L5 4.5 L0 9 Z" fill="#000"/></svg>
<div style="left:0px;top:23px;width:513px;height:1px;background:#a0a0a0;"></div>
<div style="left:41px;top:45px;width:472px;height:1px;background:#a0a0a0;"></div>
<div style="left:0px;top:45px;width:40px;height:1px;background:#e2e2e8;"></div>
<div style="left:85px;top:1px;width:1px;height:20px;background:#e4e4ea;box-shadow:1px 0 0 #fff;"></div>
<div style="left:85px;top:23px;width:1px;height:23px;background:#a0a0a0;"></div>
<div class="t" style="left:48px;top:5px;width:37px;overflow:hidden;font-size:13px;line-height:15px;color:#000;">ID</div>
<div style="left:41px;top:24px;width:44px;height:21px;background:#3399ff;"></div>
<div class="t" style="left:44px;top:28px;width:40px;overflow:hidden;font-size:13px;line-height:15px;color:#fff;">3</div>
<div style="left:189px;top:1px;width:1px;height:20px;background:#e4e4ea;box-shadow:1px 0 0 #fff;"></div>
<div style="left:189px;top:23px;width:1px;height:23px;background:#a0a0a0;"></div>
<div class="t" style="left:93px;top:5px;width:96px;overflow:hidden;font-size:13px;line-height:15px;color:#000;">Segment_ID</div>
<div class="t" style="left:89px;top:28px;width:99px;overflow:hidden;font-size:13px;line-height:15px;color:#000;">1</div>
<div style="left:264px;top:1px;width:1px;height:20px;background:#e4e4ea;box-shadow:1px 0 0 #fff;"></div>
<div style="left:264px;top:23px;width:1px;height:23px;background:#a0a0a0;"></div>
<div class="t" style="left:197px;top:5px;width:67px;overflow:hidden;font-size:13px;line-height:15px;color:#000;">Ack_ID</div>
<div class="t" style="left:193px;top:28px;width:70px;overflow:hidden;font-size:13px;line-height:15px;color:#000;">4</div>
<div style="left:392px;top:1px;width:1px;height:20px;background:#e4e4ea;box-shadow:1px 0 0 #fff;"></div>
<div style="left:392px;top:23px;width:1px;height:23px;background:#a0a0a0;"></div>
<div class="t" style="left:272px;top:5px;width:120px;overflow:hidden;font-size:13px;line-height:15px;color:#000;">ElementPosition</div>
<div class="t" style="left:268px;top:28px;width:123px;overflow:hidden;font-size:13px;line-height:15px;color:#000;">10</div>
<div class="t" style="left:400px;top:5px;width:113px;overflow:hidden;font-size:13px;line-height:15px;color:#000;">ComponentDataElementPosition</div>
<div class="t" style="left:396px;top:28px;width:116px;overflow:hidden;font-size:13px;line-height:15px;color:#000;">0</div>
</div>
<div style="left:415px;top:745px;width:513px;height:17px;background:linear-gradient(#e8e6e8 0,#eeecee 2px,#f0eef0 50%,#eeecee 100%);"></div>
<svg style="position:absolute;left:421px;top:749px" width="6" height="9"><path d="M4.5 0.5 L0.5 4.5 L4.5 8.5 Z" fill="#3a3a3a"/></svg>
<svg style="position:absolute;left:918px;top:749px" width="6" height="9"><path d="M0.5 0.5 L4.5 4.5 L0.5 8.5 Z" fill="#3a3a3a"/></svg>
<div style="left:433px;top:746px;width:15px;height:15px;border:1px solid #9c9a9c;border-radius:2px;background:linear-gradient(#fbfbfb 0,#f2f2f2 45%,#dedede 55%,#d8d8d8 100%);box-shadow:inset 0 0 0 1px #fdfdfd;"></div>
<div class="t" style="left:17px;top:274px;font-size:13px;line-height:15px;font-weight:bold;color:#000;letter-spacing:0.27px;">Implementation Acknowledgment:</div>
<div class="t" style="left:366px;top:274px;font-size:13px;line-height:15px;font-weight:bold;color:#000;">Transaction Response:</div>
<div class="t" style="left:18px;top:498px;font-size:13px;line-height:15px;font-weight:bold;color:#000;">Segment Errors:</div>
<div class="t" style="left:414px;top:498px;font-size:13px;line-height:15px;font-weight:bold;color:#000;letter-spacing:0.15px;">Element Notes:</div>
<div style="left:933px;top:777px;width:2px;height:2px;background:#b8b6b8;box-shadow:1px 1px 0 #fff;"></div>
<div style="left:930px;top:780px;width:2px;height:2px;background:#b8b6b8;box-shadow:1px 1px 0 #fff;"></div>
<div style="left:933px;top:780px;width:2px;height:2px;background:#b8b6b8;box-shadow:1px 1px 0 #fff;"></div>
<div style="left:927px;top:783px;width:2px;height:2px;background:#b8b6b8;box-shadow:1px 1px 0 #fff;"></div>
<div style="left:930px;top:783px;width:2px;height:2px;background:#b8b6b8;box-shadow:1px 1px 0 #fff;"></div>
<div style="left:933px;top:783px;width:2px;height:2px;background:#b8b6b8;box-shadow:1px 1px 0 #fff;"></div>

</body></html>
